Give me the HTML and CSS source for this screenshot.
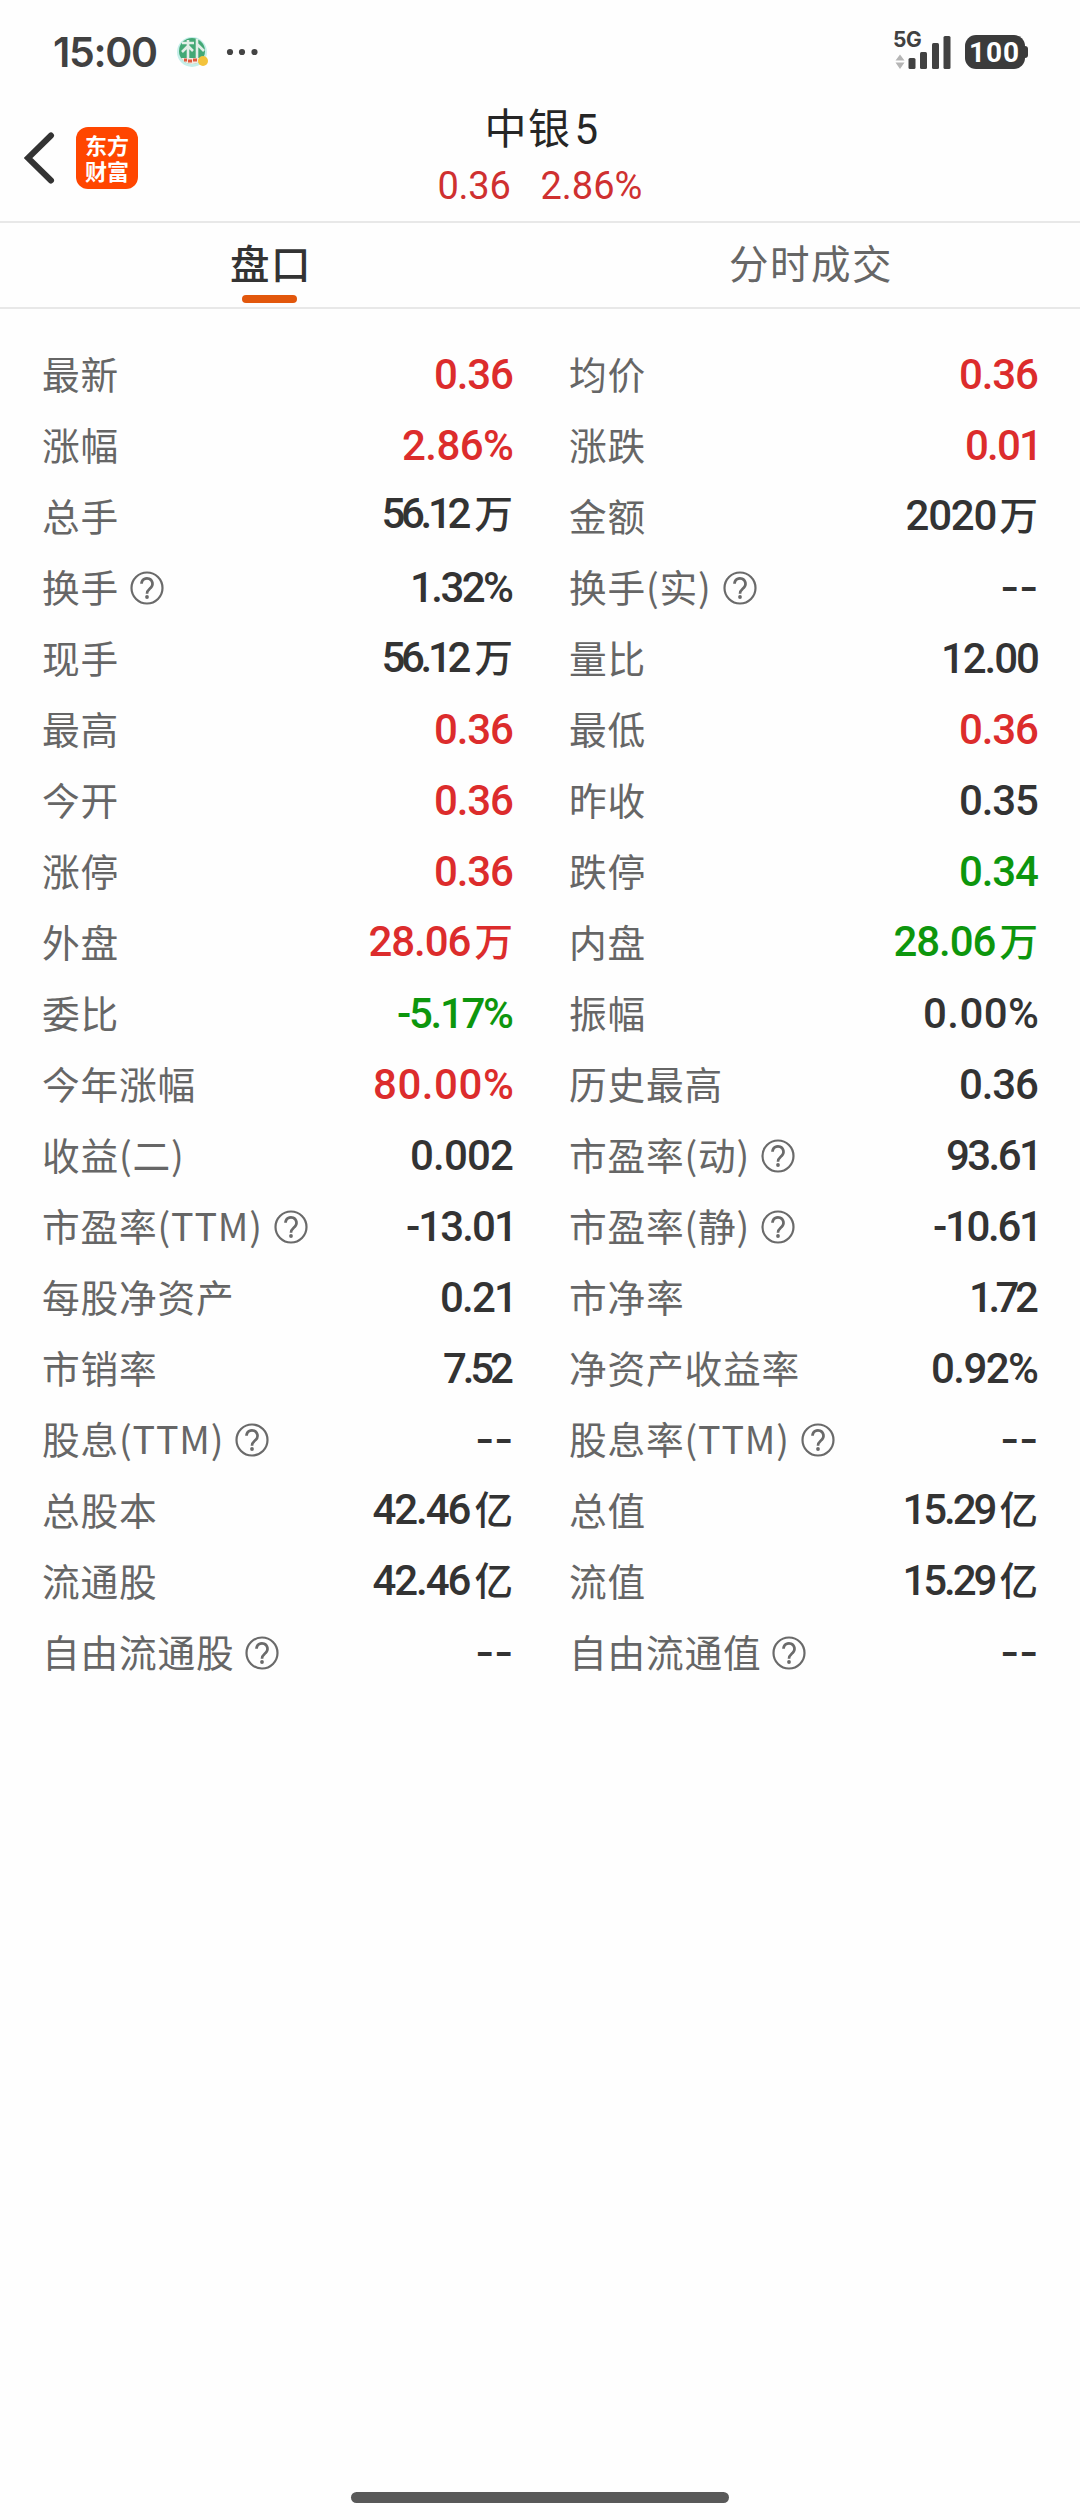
FILE: index.html
```html
<!DOCTYPE html>
<html lang="zh-CN">
  <head>
    <meta charset="UTF-8" />
    <title>中银5</title>
    <link rel="stylesheet" href="styles.css" />
  </head>
  <body>
    <div class="status-bar">
      <span class="time" data-width="102">15:00</span>
      <svg class="notice" width="32" height="32" viewBox="0 0 32 32">
        <circle cx="15" cy="16" r="15" fill="#c5eee9" />
        <circle cx="15" cy="15" r="13" fill="#43a875" />
        <path d="M4 22h22a13 13 0 0 1-22 0z" fill="#f3e9e2" />
        <path d="M7 24h3M11 25h4M16 24h4" stroke="#df5a3c" stroke-width="3" />
        <path d="M5 7h12M11 4v18M11 10l-6 6M11 10l5 5M20 3v19M20 8l7 7" stroke="#e2eee7" stroke-width="2.6" fill="none" />
        <circle cx="26" cy="25" r="5" fill="#f3c33c" />
      </svg>
      <svg class="more" width="32" height="8" viewBox="0 0 32 8" fill="#444">
        <circle cx="4" cy="4" r="3.1" />
        <circle cx="16" cy="4" r="3.1" />
        <circle cx="28.5" cy="4" r="3.1" />
      </svg>
      <div class="network">
        <span class="net-type" data-width="27">5G</span>
        <svg width="56" height="34" viewBox="0 0 56 34">
          <path d="M5 19.5l4.500 6H.5zM5 34l4.500-6.500H.5z" fill="#b5b5b5" />
          <g fill="#414141">
            <rect x="13.500" y="23" width="7" height="11" rx="1.500" />
            <rect x="25" y="17" width="7" height="17" rx="1.500" />
            <rect x="37" y="8" width="7" height="26" rx="1.500" />
            <rect x="48.500" y="1" width="7" height="33" rx="1.500" />
          </g>
        </svg>
      </div>
      <div class="battery"><span data-width="47">100</span></div>
    </div>

    <header>
      <svg class="back" width="32" height="52" viewBox="0 0 32 52">
        <path d="M27 3.500L4 26l23 22.500" fill="none" stroke="#333" stroke-width="6" stroke-linecap="round" />
      </svg>
      <div class="logo">东方<br />财富</div>
      <div class="title">
        <h1>中银<span>5</span></h1>
        <p><span data-width="70">0.36</span><span data-width="100">2.86%</span></p>
      </div>
    </header>

    <nav>
      <a class="tab active">盘口</a>
      <a class="tab">分时成交</a>
    </nav>

    <div class="quote" id="quote"></div>
    <div class="home-bar"></div>

    <script>
      // 名称, 数值, 数字宽度, 颜色, 是否有说明图标
      const list = [
        ['最新', '0.36', 77, 'red'], ['均价', '0.36', 77, 'red'],
        ['涨幅', '2.86%', 110, 'red'], ['涨跌', '0.01', 68, 'red'],
        ['总手', '56.12万', 87, 'raise'], ['金额', '2020万', 89, ''],
        ['换手', '1.32%', 100, '', true], ['换手(实)', '--', 34, '', true],
        ['现手', '56.12万', 87, ''], ['量比', '12.00', 94, ''],
        ['最高', '0.36', 77, 'red'], ['最低', '0.36', 77, 'red'],
        ['今开', '0.36', 77, 'red'], ['昨收', '0.35', 77, ''],
        ['涨停', '0.36', 77, 'red'], ['跌停', '0.34', 77, 'green'],
        ['外盘', '28.06万', 101, 'red'], ['内盘', '28.06万', 101, 'green'],
        ['委比', '-5.17%', 115, 'green'], ['振幅', '0.00%', 113, ''],
        ['今年涨幅', '80.00%', 138, 'red'], ['历史最高', '0.36', 77, ''],
        ['收益(二)', '0.002', 101, ''], ['市盈率(动)', '93.61', 88, '', true],
        ['市盈率(TTM)', '-13.01', 103, '', true], ['市盈率(静)', '-10.61', 101, '', true],
        ['每股净资产', '0.21', 68, ''], ['市净率', '1.72', 66, ''],
        ['市销率', '7.52', 69, ''], ['净资产收益率', '0.92%', 105, ''],
        ['股息(TTM)', '--', 34, '', true], ['股息率(TTM)', '--', 34, '', true],
        ['总股本', '42.46亿', 97, ''], ['总值', '15.29亿', 90, ''],
        ['流通股', '42.46亿', 97, ''], ['流值', '15.29亿', 90, ''],
        ['自由流通股', '--', 34, '', true], ['自由流通值', '--', 34, '', true]
      ]
      const help = `<svg class="help" width="34" height="34" viewBox="0 0 34 34" fill="none" stroke="#6a6a6a">
        <circle cx="17" cy="17" r="15.500" stroke-width="2.200" />
        <path d="M11.500 12.800a5.500 5.500 0 1 1 9.300 4c-2.400 2.200-3.800 3-3.800 6" stroke-width="2.700" />
        <circle cx="17" cy="26" r="1.900" fill="#6a6a6a" stroke="none" />
      </svg>`
      document.querySelector('#quote').innerHTML = list.map(([name, value, width, color, tip]) => {
        const num = value.replace(/[万亿]/, '')
        const unit = value.slice(num.length)
        let type = ''
        if (num === '--') type = 'none'
        if (/1$/.test(value)) type = 'end-one'
        return `<div class="item">
          <span class="name">${name}</span>${tip ? help : ''}
          <span class="value ${color} ${type}"><span class="num" data-width="${width}">${num}</span>${unit ? `<span class="unit">${unit}</span>` : ''}</span>
        </div>`
      }).join('')

      // 按固定宽度调整字距
      const ctx = document.createElement('canvas').getContext('2d')
      document.querySelectorAll('[data-width]').forEach(el => {
        const style = getComputedStyle(el)
        ctx.font = `${style.fontWeight} ${style.fontSize} ${style.fontFamily}`
        const m = ctx.measureText(el.textContent)
        const ink = m.actualBoundingBoxLeft + m.actualBoundingBoxRight
        const space = (el.dataset.width - ink) / (el.textContent.length - 1)
        el.style.letterSpacing = space + 'px'
        el.style.marginLeft = m.actualBoundingBoxLeft + 'px'
        el.style.marginRight = m.actualBoundingBoxRight - m.width - space + 'px'
      })
    </script>
  </body>
</html>
```
FILE: styles.css
```css
* {
  box-sizing: border-box;
}
html,
body {
  margin: 0;
}
body {
  display: flex;
  flex-direction: column;
  height: 2520px;
  background-color: #fefefe;
  color: #333;
  font-family: Roboto, 'Noto Sans CJK SC', sans-serif;
}

.status-bar {
  display: flex;
  align-items: center;
  height: 103px;
  padding: 0 51px 0 54px;
}
.time {
  font-family: Inter, sans-serif;
  font-size: 41px;
  font-weight: 600;
  color: #414141;
}
.notice {
  margin-left: 21px;
}
.more {
  margin-left: 17px;
}
.network {
  position: relative;
  height: 34px;
  margin-left: auto;
}
.network svg {
  display: block;
}
.net-type {
  position: absolute;
  left: -1px;
  top: -8px;
  font-family: Inter, sans-serif;
  font-size: 21px;
  line-height: 26px;
  font-weight: 700;
  color: #414141;
}
.battery {
  position: relative;
  width: 60px;
  height: 34px;
  margin-left: 14px;
  margin-right: 4px;
  padding-left: 6px;
  border-radius: 11px;
  background-color: #3b3b3b;
  color: #fff;
  font-size: 28px;
  font-weight: 700;
  line-height: 35px;
}
.battery:after {
  content: '';
  position: absolute;
  right: -3px;
  top: 11px;
  width: 6px;
  height: 12px;
  border-radius: 3px;
  background-color: #3b3b3b;
}

header {
  position: relative;
  display: flex;
  align-items: center;
  height: 118px;
  padding: 0 24px 8px;
}
.logo {
  width: 62px;
  height: 62px;
  margin-left: 20px;
  padding-top: 4px;
  border-radius: 12px;
  background-color: #ff4600;
  color: #fff;
  font-family: 'Noto Sans CJK SC', sans-serif;
  font-size: 22px;
  font-weight: 700;
  line-height: 26px;
  text-align: center;
}
.title {
  position: absolute;
  left: 4px;
  right: 0;
  top: 1px;
  text-align: center;
}
.title h1 {
  margin: 0;
  font-size: 42px;
  font-weight: 400;
  line-height: 52px;
  letter-spacing: 1.5px;
  color: #262626;
}
.title h1 span {
  margin-left: 3px;
}
.title p {
  display: flex;
  justify-content: center;
  gap: 32px;
  margin: 8px 0 0 -3px;
  font-size: 38px;
  line-height: 44px;
  color: #cf3030;
}

nav {
  display: flex;
  height: 88px;
  border-top: 2px solid #e8e8e8;
  border-bottom: 2px solid #e8e8e8;
}
.tab {
  position: relative;
  flex: 1;
  padding-left: 2px;
  font-size: 39.5px;
  line-height: 86px;
  letter-spacing: 1.5px;
  text-align: center;
  color: #666;
}
.tab.active {
  font-weight: 500;
  color: #333;
}
.tab.active:after {
  content: '';
  position: absolute;
  left: 242px;
  bottom: 4px;
  width: 55px;
  height: 8px;
  border-radius: 4px;
  background-color: #e2570c;
}

.quote {
  display: grid;
  grid-template-columns: 471px 469px;
  column-gap: 56px;
  padding: 30px 42px 0;
}
.item {
  display: flex;
  align-items: center;
  height: 71px;
}
.name {
  padding-bottom: 3px;
  font-family: 'Noto Sans CJK SC', sans-serif;
  font-size: 37.7px;
  line-height: 54px;
  letter-spacing: 0.8px;
  color: #666;
}
.help {
  margin-left: 11px;
}
.value {
  display: flex;
  align-items: baseline;
  margin-left: auto;
  font-size: 42px;
  font-weight: 500;
  line-height: 54px;
}
.unit {
  margin-left: 4px;
  font-size: 38.5px;
}
.none {
  padding-right: 2px;
  padding-bottom: 2px;
  font-family: Inter, sans-serif;
}
.end-one {
  padding-right: 3px;
}
.red {
  color: #dc2c2c;
}
.green {
  color: #0d960d;
}
.raise {
  padding-bottom: 5px;
}

.home-bar {
  width: 378px;
  height: 11px;
  margin: auto auto 17px;
  border-radius: 6px;
  background-color: #595959;
}
```
